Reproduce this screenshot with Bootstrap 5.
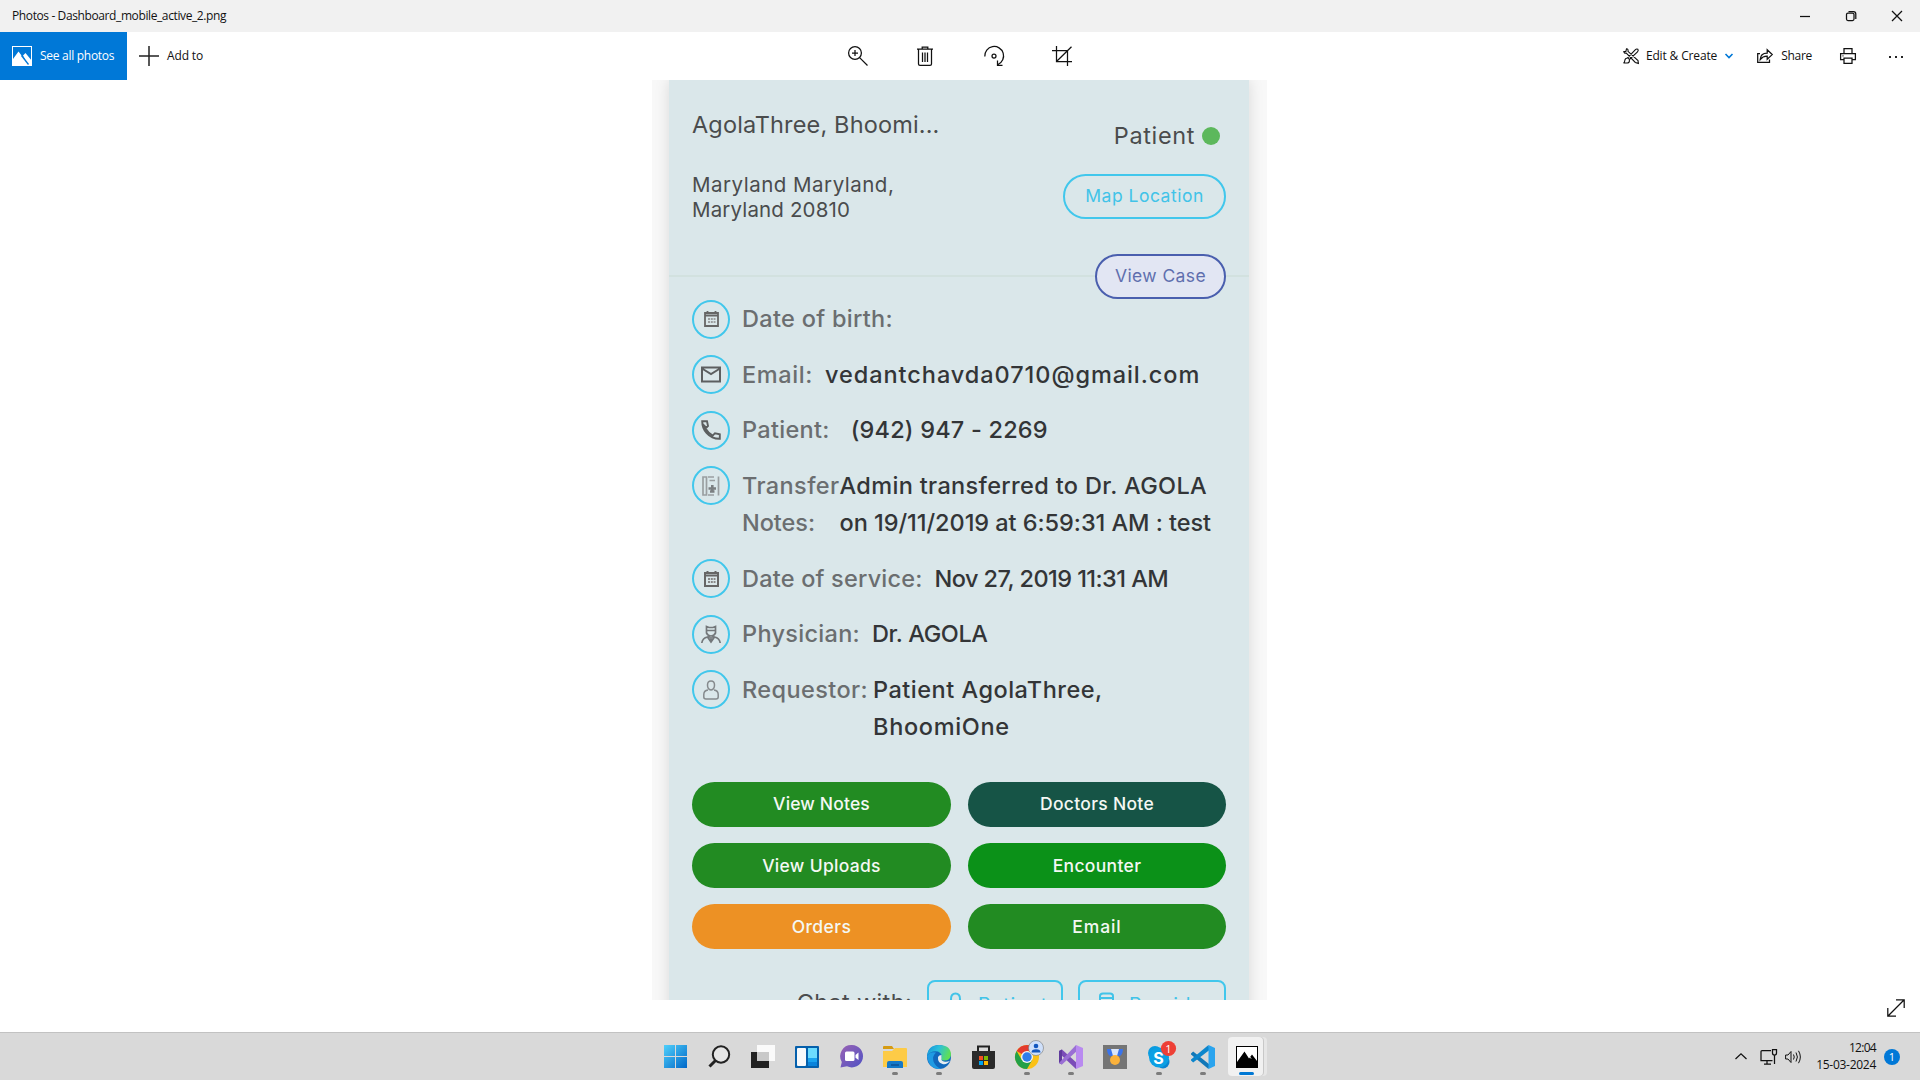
<!DOCTYPE html>
<html lang="en">
<head>
<meta charset="utf-8">
<title>Photos - Dashboard_mobile_active_2.png</title>
<link href="https://cdn.jsdelivr.net/npm/bootstrap@5.3.0/dist/css/bootstrap.min.css" rel="stylesheet">
<style>
body{height:1080px;overflow:hidden;background:#fff;font:12px/16px "Open Sans","Noto Sans",sans-serif;color:#111}
svg{display:block;flex:none;overflow:visible}
.ln{fill:none;stroke:#111;stroke-width:1.25}
.t{display:inline-block;white-space:nowrap}
/* letter-spacing scale, hundredths of a pixel */
.n70{letter-spacing:-.7px}.n55{letter-spacing:-.56px}.n40{letter-spacing:-.39px}.n30{letter-spacing:-.28px}.n15{letter-spacing:-.15px}.n05{letter-spacing:-.05px}
.p15{letter-spacing:.15px}.p20{letter-spacing:.2px}.p30{letter-spacing:.3px}.p35{letter-spacing:.34px}.p40{letter-spacing:.4px}.p50{letter-spacing:.5px}
.p60{letter-spacing:.61px}.p70{letter-spacing:.68px}.p90{letter-spacing:.88px}.p95{letter-spacing:.94px}
.titlebar{height:32px;background:#f1f1f1}
.titlebar .cap-btn{width:46px;height:32px}
.toolbar{height:48px}
.see-all{width:127px;background:#0078d7;color:#fff;padding-left:12px;gap:8px}
.mid-tools{left:823px;top:0;height:48px}
.mid-tools div{width:68.4px}
.edit-lab{margin-left:7px}
.print-ic{margin-left:28px}
.more-ic{margin:2px 17px 0 33px}
.stage{height:952px}
.photo{width:615px;height:920px;margin-left:652px;background:#f8f8f8;padding-left:17px}
.pcard{width:580px;height:1000px;background:#dae7ea;box-shadow:0 0 14px rgba(0,0,0,.13);font-family:Inter,"Open Sans",sans-serif;font-size:23.5px;color:#4a4c4d}
.phead{height:197px;border-bottom:2px solid #d2e1df;padding:0 23px}
.pname{margin-top:30px;line-height:30px}
.addr{margin-top:31.500px;font-size:20.5px;line-height:25px}
.ptype{margin-top:41px;line-height:30px;gap:7px;padding-right:6px}
.dot{width:18px;height:18px;border-radius:50%;background:#5cb85c}
.pillb{height:45px;border-radius:23px;font-size:17.5px;border:2px solid}
.b-map{width:163px;margin-top:22.500px;color:#41c3e8;border-color:#41c7ec}
.b-case{width:131px;margin-top:35px;color:#5f6fae;border-color:#4a5fae;background:#e2e6f3}
.rows{padding:22.500px 23px 0}
.rw{height:55.5px;line-height:37.3px;font-weight:450}
.rw.two{height:93.4px}
.ring{width:38px;height:39px;border:2px solid #41c7ec;border-radius:50%;margin-right:12px;flex:none}
.lab{color:#6b6e70;margin-top:.5px}
.val{color:#333537;margin-top:.5px}
.gap-s{margin-left:5px}.gap-m{margin-left:12px}.gap-l{margin-left:21px}
.acts{padding:0 23px;display:grid;grid-template-columns:259px 258px;column-gap:17px;row-gap:16.3px;margin-top:18px}
.acts div{height:45px;border-radius:23px;color:#f4f8f4;font-size:17.5px;font-weight:500}
.g1{background:#228b22}.g2{background:#165446}.g3{background:#0b9118}.g4{background:#ed9124}
.chat{padding:0 23px;margin-top:31px;gap:15px}
.chat-lab{margin-top:5px;line-height:36px}
.cbtn{height:60px;border:2px solid #41c7ec;border-radius:8px;color:#41c3e8;font-size:19.5px;line-height:26px;padding:10px 0 0 19px;gap:15px}
.cb-pat{width:136px}.cb-prov{width:148px}
.expand-ic{left:1887px;top:919px}
.taskbar{height:48px;background:#d9d9d9;border-top:1px solid #c2c2c2}
.apps{margin-left:653px;width:616px}
.app{width:44px;height:47px}
.app.run:after{content:"";position:absolute;left:19px;bottom:5px;width:6px;height:3px;border-radius:2px;background:#7c7c7c}
.app.cur:before{content:"";position:absolute;left:3px;top:4px;width:35px;height:39px;border-radius:4px;background:#f1f1f1;box-shadow:1px 0 0 #c8c8c8,4px 0 0 #e6e6e6}
.app.cur:after{content:"";position:absolute;left:14px;bottom:5px;width:15px;height:3px;border-radius:2px;background:#0078d4}
.app svg{position:relative}
.tray{right:20px;top:0;height:47px;gap:8px}
.net-ic{margin-left:5px}
.clock{line-height:16.4px;width:67px}
.cnt{width:16px;height:16px;border-radius:50%;background:#0078d7;color:#fff;font-size:11px;line-height:16px}
</style>
</head>
<body class="d-flex flex-column">
<header class="titlebar d-flex align-items-center">
  <span class="t n40 ms-2 ps-1 me-auto">Photos - Dashboard_mobile_active_2.png</span>
  <div class="cap-btn d-flex align-items-center justify-content-center"><svg width="10" height="10" class="ln"><path d="M0 5.5H10"/></svg></div>
  <div class="cap-btn d-flex align-items-center justify-content-center"><svg width="10" height="10" class="ln"><rect x=".5" y="2" width="7.5" height="7.5" rx="1.5"/><path d="M2.5.5H7.5Q9.8.5 9.8 3V8"/></svg></div>
  <div class="cap-btn d-flex align-items-center justify-content-center"><svg width="10" height="10" class="ln"><path d="M0 0 10 10M10 0 0 10"/></svg></div>
</header>
<nav class="toolbar d-flex align-items-stretch position-relative">
  <div class="see-all d-flex align-items-center">
    <svg width="20" height="20"><rect x=".5" y=".5" width="19" height="19" fill="none" stroke="#fff"/><path d="M1 13 6.500 5.500 14.500 16 11 9.500 13.500 7 20 15V20H0V14Z" fill="#fff"/><path d="M9.500 9.500 16.500 18.500" stroke="#0078d7" stroke-width="1.300"/></svg>
    <span class="t n30">See all photos</span>
  </div>
  <div class="d-flex align-items-center ps-2 gap-2 ms-1">
    <svg width="20" height="20"><path d="M10 0V20M0 10H20" stroke="#222" stroke-width="1.500"/></svg>
    <span class="t n15">Add to</span>
  </div>
  <div class="mid-tools position-absolute d-flex align-items-center">
    <div class="d-flex justify-content-center"><svg width="20" height="20" class="ln"><circle cx="8" cy="7" r="6.400"/><path d="M12.600 11.600 20.500 19.500M5 7H11M8 4V10"/></svg></div>
    <div class="d-flex justify-content-center"><svg width="20" height="20" class="ln"><path d="M1 3.200H17M6.200 3V1H11.800V3M2.500 3.500V18Q2.500 19.400 4 19.400H14Q15.500 19.400 15.500 18V3.500M6.500 6.500V16M9 6.500V16M11.500 6.500V16"/></svg></div>
    <div class="d-flex justify-content-center"><svg width="20" height="20" class="ln"><path d="M.8 10.500A9.400 9.400 0 1 1 14 18.500M13.500 14.500V19.400H18.500"/><circle cx="10" cy="10" r="2"/></svg></div>
    <div class="d-flex justify-content-center"><svg width="20" height="20" class="ln"><path d="M4.500 0V15.500H20M0 4.500H15.500V20M4.500 15.500 19.500.8"/></svg></div>
  </div>
  <div class="ms-auto d-flex align-items-center">
    <svg width="16" height="16" class="ln"><path d="M3.500.8Q5.500 1 5 3.300L15 12.500 15.400 15.400 12.300 14.500 3.300 5.200Q1 5.600.8 3.500L2.800 3.600ZM14.800 1.200Q13.500.5 12.200 1.800L4.800 9.500 6.500 11.500 14.500 3.800Q15.800 2.500 14.800 1.200ZM4.800 10Q2 10 1.800 12.500 1.700 14.500.5 15H4.500Q7 14.500 6.300 11.500" stroke-width="1.100"/></svg>
    <span class="t n15 edit-lab">Edit &amp; Create</span>
    <svg width="8" height="6" class="ms-2"><path d="M.5 1 4 4.500 7.500 1" fill="none" stroke="#0078d7" stroke-width="1.600"/></svg>
    <svg width="16" height="14" class="ln ms-4"><path d="M3 4.500H.7V13.300H12.500V10.500M3.200 10.500Q3.500 4 10.200 4V.8L15.200 5.600 10.200 10.300V7.200Q6 7 3.200 10.500Z"/></svg>
    <span class="t n30 ms-2">Share</span>
    <svg width="16" height="16" class="ln print-ic"><path d="M3.500 11.500H.6V5.500H15.400V11.500H12.500M4 5V.6H12V5M4 10H12V15.400H4ZM2.500 7.800H3.500"/></svg>
    <svg width="14" height="2" class="more-ic"><path d="M0 0h2v2H0zM6 0h2v2H6zM12 0h2v2h-2z" fill="#222"/></svg>
  </div>
</nav>
<main class="stage position-relative">
  <div class="photo overflow-hidden">
    <div class="pcard">
      <div class="phead d-flex justify-content-between">
        <div>
          <div class="pname"><span class="t p15">AgolaThree, Bhoomi...</span></div>
          <div class="addr"><span class="t p50">Maryland Maryland,</span><br><span class="t p15">Maryland 20810</span></div>
        </div>
        <div class="d-flex flex-column align-items-end">
          <div class="ptype d-flex align-items-center"><span class="t p60">Patient</span><span class="dot"></span></div>
          <div class="pillb b-map d-flex flex-shrink-0 align-items-center justify-content-center"><span class="t p50">Map Location</span></div>
          <div class="pillb b-case d-flex flex-shrink-0 align-items-center justify-content-center"><span class="t p40">View Case</span></div>
        </div>
      </div>
      <div class="rows">
        <div class="rw d-flex"><div class="ring d-flex align-items-center justify-content-center"><svg width="17" height="18"><path d="M2 3H15V16H2ZM2 5.500H15M4.500 1V4M12.500 1V4" fill="none" stroke="#666" stroke-width="1.800"/><path d="M5 9H12.500M5 12H12.500" stroke="#888" stroke-width="1.600" stroke-dasharray="2 .8"/></svg></div><div class="lab"><span class="t p30">Date of birth:</span></div></div>
        <div class="rw d-flex"><div class="ring d-flex align-items-center justify-content-center"><svg width="20" height="17"><path d="M1 1.500H19V15.500H1ZM1 2.500 10 8 19 2.500" fill="none" stroke="#5c5f60" stroke-width="2"/></svg></div><div class="lab"><span class="t p60">Email:</span></div><div class="val gap-m"><span class="t p95">vedantchavda0710@gmail.com</span></div></div>
        <div class="rw d-flex"><div class="ring d-flex align-items-center justify-content-center"><svg width="20" height="20"><path d="M1.200 1.200H6L7 6 4.500 8.500Q7.500 13.500 11.700 15.600L14 13.200 18.800 14.200V18.800Q11 19 5.500 12.800 1.200 8 1.200 1.200ZM1.500 4 5 7.500" fill="none" stroke="#5c5f60" stroke-width="1.900"/></svg></div><div class="lab"><span class="t p30">Patient:</span></div><div class="val gap-l"><span class="t p20">(942) 947 - 2269</span></div></div>
        <div class="rw two d-flex"><div class="ring d-flex align-items-center justify-content-center"><svg width="18" height="20"><path d="M1 1H4.500V19H1ZM6 1H12M6 19H12M7.500 4.500H13M16.500 .5V19.500" fill="none" stroke="#9a9fa1" stroke-width="1.700"/><path d="M6.500 12.500H14M10.300 9V16M8 15.500H12.500" stroke="#7b7f81" stroke-width="2.600" fill="none"/></svg></div><div class="lab"><span class="t p40">Transfer</span><br><span class="t n05">Notes:</span></div><div class="val"><span class="t p35">Admin transferred to Dr. AGOLA</span><br><span class="t n05">on 19/11/2019 at 6:59:31 AM : test</span></div></div>
        <div class="rw d-flex"><div class="ring d-flex align-items-center justify-content-center"><svg width="17" height="18"><path d="M2 3H15V16H2ZM2 5.500H15M4.500 1V4M12.500 1V4" fill="none" stroke="#666" stroke-width="2"/><path d="M5 9H12.500M5 12H12.500" stroke="#888" stroke-width="1.800" stroke-dasharray="2 .8"/></svg></div><div class="lab"><span class="t p20">Date of service:</span></div><div class="val gap-m"><span class="t n55">Nov 27, 2019 11:31 AM</span></div></div>
        <div class="rw d-flex"><div class="ring d-flex align-items-center justify-content-center"><svg width="20" height="19" fill="none" stroke="#73777a" stroke-width="1.700"><path d="M5.500 8V1.500L8 2.500H12L14.500 1.500V8Q13 11 10 11 7 11 5.500 8ZM5.500 5.500H14.500M.8 18Q1.500 13 6.500 12L10 17 13.500 12Q18.500 13 19.200 18M8 11V14.500M12 11V14.500M10 12V16"/></svg></div><div class="lab"><span class="t p30">Physician:</span></div><div class="val gap-m"><span class="t n40">Dr. AGOLA</span></div></div>
        <div class="rw two d-flex"><div class="ring d-flex align-items-center justify-content-center"><svg width="16" height="20" fill="none" stroke="#858a8d" stroke-width="1.500"><path d="M8 1Q11.500 1 11.500 5 11.500 9.500 8 10 4.500 9.500 4.500 5 4.500 1 8 1ZM5 10Q.8 10.500.8 14.500V17Q.8 19 3 19H13Q15.200 19 15.200 17V14.500Q15.200 10.500 11 10"/></svg></div><div class="lab"><span class="t p40">Requestor:</span></div><div class="val gap-s"><span class="t p50">Patient AgolaThree,</span><br><span class="t p70">BhoomiOne</span></div></div>
      </div>
      <div class="acts">
        <div class="g1 d-flex align-items-center justify-content-center"><span class="t p15">View Notes</span></div>
        <div class="g2 d-flex align-items-center justify-content-center"><span class="t p30">Doctors Note</span></div>
        <div class="g1 d-flex align-items-center justify-content-center"><span class="t p30">View Uploads</span></div>
        <div class="g3 d-flex align-items-center justify-content-center"><span class="t p35">Encounter</span></div>
        <div class="g4 d-flex align-items-center justify-content-center"><span class="t p40">Orders</span></div>
        <div class="g1 d-flex align-items-center justify-content-center"><span class="t p90">Email</span></div>
      </div>
      <div class="chat d-flex justify-content-end">
        <span class="t p35 chat-lab">Chat with:</span>
        <div class="cbtn cb-pat d-flex"><svg width="15" height="20" fill="none" stroke="#41c3e8" stroke-width="2"><path d="M7.500 1.500Q12 1.500 12 7 12 12 7.500 12 3 12 3 7 3 1.500 7.500 1.500Z"/></svg><span class="t p90">Patient</span></div>
        <div class="cbtn cb-prov d-flex"><svg width="15" height="20" fill="none" stroke="#41c3e8" stroke-width="2"><path d="M1 12V4Q1 1.500 4 1.500H11Q14 1.500 14 4V12M1 6H14"/></svg><span class="t p60">Provider</span></div>
      </div>
    </div>
  </div>
  <svg class="expand-ic position-absolute ln" width="18" height="18"><path d="M.8 17.200 17.200.8M9 .8H17.200V9M.8 9V17.200H9"/></svg>
</main>
<footer class="taskbar position-relative">
  <div class="apps d-flex">
    <div class="app position-relative d-flex align-items-center justify-content-center"><svg width="23" height="23"><defs><linearGradient id="wn" x2="1" y2="1"><stop stop-color="#4fd0fb"/><stop offset="1" stop-color="#0067c8"/></linearGradient></defs><path d="M0 0H11V11H0ZM12 0H23V11H12ZM0 12H11V23H0ZM12 12H23V23H12Z" fill="url(#wn)"/></svg></div>
    <div class="app position-relative d-flex align-items-center justify-content-center"><svg width="22" height="23" fill="none" stroke="#222"><circle cx="13" cy="9.500" r="8.200" stroke-width="2" fill="#e6e6e6"/><path d="M7.500 15.500 1.500 21.500" stroke-width="3"/></svg></div>
    <div class="app position-relative d-flex align-items-center justify-content-center"><svg width="24" height="23"><path d="M0 7H18V23H0Z" fill="#222"/><path d="M6 0H24V16H6Z" fill="#fafafa"/><path d="M6 7H18V16H6Z" fill="#c9c9c9"/></svg></div>
    <div class="app position-relative d-flex align-items-center justify-content-center"><svg width="24" height="22"><rect width="24" height="22" rx="1" fill="#0560ac"/><rect x="2" y="2" width="9" height="18" rx="1" fill="#f7f9fb"/><path d="M13 2H22V12H13Z" fill="#6cdcff"/><path d="M13 12H22V16H13Z" fill="#1aa4f0"/><path d="M13 16H22V20H13Z" fill="#0a84dc"/></svg></div>
    <div class="app position-relative d-flex align-items-center justify-content-center"><svg width="23" height="23"><defs><linearGradient id="tm" x2="1" y2="1"><stop stop-color="#9a62b4"/><stop offset="1" stop-color="#4f52c4"/></linearGradient></defs><path d="M12 0A11.200 11.200 0 1 1 7 21.300L.5 22.500 1.800 17A11.200 11.200 0 0 1 12 0Z" fill="url(#tm)"/><rect x="5" y="6.500" width="9.500" height="9.500" rx="1.500" fill="#fff"/><path d="M15.500 10 18.500 7.500V15L15.500 12.800Z" fill="#fff"/></svg></div>
    <div class="app run position-relative d-flex align-items-center justify-content-center"><svg width="24" height="22"><path d="M0 1Q0 0 1 0H9L11 3H0Z" fill="#d69b12"/><path d="M0 5H9L12 2H23Q24 2 24 3V21H0Z" fill="#fdcb47"/><path d="M4 22V17Q4 15 6 15H18Q20 15 20 17V22Z" fill="#1579c8"/><path d="M8 19H16" stroke="#0c5296" stroke-width="1.500"/></svg></div>
    <div class="app run position-relative d-flex align-items-center justify-content-center"><svg width="24" height="24"><defs><linearGradient id="eg" x2="1" y2=".3"><stop stop-color="#1590d8"/><stop offset=".5" stop-color="#2bbfdc"/><stop offset="1" stop-color="#5ddf59"/></linearGradient></defs><circle cx="12" cy="12" r="12" fill="#1068bc"/><path d="M0 11Q1 0 12 0 24 0 24 10 23.500 15.500 17 15.500 13 15 14.500 12.500 15.500 8.500 11 6.500 4 5 0 11Z" fill="url(#eg)"/><path d="M14.500 13Q13.500 16 18 16.800 21 17 23 15.800 20 20 15.500 19 10.500 17.500 11 12 12 10 14.500 10Z" fill="#e4edf2"/><path d="M0 11Q3 6 9 7.500 5 11 6.500 16.500 9 22.500 14 23.800 2 25 0 11Z" fill="#1f9be3"/></svg></div>
    <div class="app position-relative d-flex align-items-center justify-content-center"><svg width="23" height="24"><path d="M6 7V1.500H17V7" fill="none" stroke="#222" stroke-width="2"/><path d="M0 6H23V22Q23 24 21 24H2Q0 24 0 22Z" fill="#2a2a2a"/><path d="M7 11H11V15H7Z" fill="#f25022"/><path d="M12 11H16V15H12Z" fill="#7fba00"/><path d="M7 16H11V20H7Z" fill="#00a4ef"/><path d="M12 16H16V20H12Z" fill="#ffb900"/></svg></div>
    <div class="app run position-relative d-flex align-items-center justify-content-center"><svg width="24" height="24"><circle cx="12" cy="12" r="12" fill="#fbc116"/><path d="M12 12 1.600 6A12 12 0 0 1 22.400 6H12Z" fill="#e33b2e"/><path d="M1.600 6A12 12 0 0 0 12 24L17.200 15 12 12 6.800 15Z" fill="#23a047"/><circle cx="12" cy="12" r="6" fill="#f4f4f4"/><circle cx="12" cy="12" r="4.700" fill="#2f7eea"/><circle cx="21" cy="3" r="7.500" fill="#cfe0fb" stroke="#777" stroke-width=".6"/><circle cx="21" cy="1" r="2.300" fill="#1458c0"/><path d="M16.500 7.500Q16.500 4.200 21 4.200 25.500 4.200 25.500 7.500Z" fill="#1458c0"/></svg></div>
    <div class="app run position-relative d-flex align-items-center justify-content-center"><svg width="24" height="24"><path d="M0 6 3 4.500 19 19 17 24 0 8Z" fill="#7b4cb8"/><path d="M0 6 3 4.500V19.500L0 18Z" fill="#5f3a9c"/><path d="M0 18 17 0 19 5 3 19.500Z" fill="#9a6fd4"/><path d="M17 0 24 3V21L17 24Z" fill="#b98af0"/></svg></div>
    <div class="app position-relative d-flex align-items-center justify-content-center"><svg width="24" height="24"><path d="M0 0H24V24H0Z" fill="#757575"/><path d="M4 4H8L11 11H7Q4 9 4 4ZM20 4H16L13 11H17Q20 9 20 4Z" fill="#3a74ec"/><path d="M8 4H16L14 11H10Z" fill="#dbe6fa"/><circle cx="12" cy="15" r="5" fill="#fbb23c"/></svg></div>
    <div class="app run position-relative d-flex align-items-center justify-content-center"><svg width="24" height="24"><circle cx="8" cy="8" r="7" fill="#0b9be0"/><circle cx="16" cy="17" r="6.500" fill="#0b84d0"/><circle cx="12" cy="12.500" r="10" fill="#0aa0e4"/><text x="11.500" y="18.500" text-anchor="middle" font-family="Inter,sans-serif" font-size="16" font-weight="700" fill="#fff">S</text><circle cx="21.500" cy="3.500" r="7.600" fill="#ee4036"/><text x="21.500" y="7.500" text-anchor="middle" font-family="Open Sans,sans-serif" font-size="11" fill="#fff">1</text></svg></div>
    <div class="app run position-relative d-flex align-items-center justify-content-center"><svg width="24" height="24"><path d="M0 8.500 2.200 6.500 18.500 19.500 17.500 24 0 9.500Z" fill="#1278b8"/><path d="M0 15.500 2.200 17.500 18.500 5 17.500 0 0 14.500Z" fill="#0d86cc"/><path d="M17.500 0 24 3V21L17.500 24Z" fill="#2ba4ee"/></svg></div>
    <div class="app cur position-relative d-flex align-items-center justify-content-center"><svg width="22" height="22"><rect x=".5" y=".5" width="21" height="21" fill="#fff" stroke="#000"/><path d="M1 16 8.500 5.500 13 12.500 16 8.500 21 15V21H1Z" fill="#000"/><path d="M10 6.500 15 12.500" stroke="#fff" stroke-width="1"/></svg></div>
  </div>
  <div class="tray position-absolute d-flex align-items-center">
    <svg width="12" height="7" class="ln"><path d="M.5 6 6 .8 11.500 6"/></svg>
    <svg width="17" height="16" class="ln net-ic"><path d="M11 1.500H2Q1 1.500 1 2.500V11.500H12.500M7 11.500V15M4 15H11M14.500 6V15M12.500.5H16.500V4Q16.500 6 14.500 6 12.500 6 12.500 4Z"/></svg>
    <svg width="16" height="14" class="ln"><path d="M.6 5H3L6 1.500V12.500L3 9H.6ZM8.500 4.500Q10 7 8.500 9.500M11 2.500Q13.800 7 11 11.500M13.500 .8Q17.200 7 13.500 13.200" stroke-width="1"/></svg>
    <div class="clock text-end"><div class="n70">12:04</div><div class="n30">15-03-2024</div></div>
    <div class="cnt text-center">1</div>
  </div>
</footer>
<script src="https://cdn.jsdelivr.net/npm/bootstrap@5.3.0/dist/js/bootstrap.bundle.min.js"></script>
</body>
</html>
